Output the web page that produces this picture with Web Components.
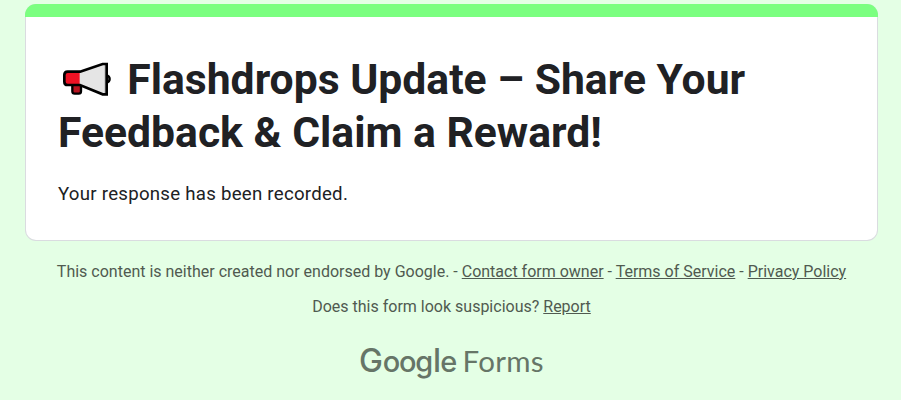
<!DOCTYPE html>
<html lang="en">
<head>
<meta charset="utf-8">
<title>Flashdrops Update</title>
<style>
  body {
    margin: 0;
    background: #e4ffe5;
    font-family: Roboto, "Liberation Sans", sans-serif;
    color: #202124;
  }
</style>
</head>
<body>
<form-page>
  <form-card>
    <span slot="title"><megaphone-icon></megaphone-icon> Flashdrops Update – Share Your Feedback &amp; Claim a Reward!</span>
    Your response has been recorded.
  </form-card>
  <form-footer>
    <span>This content is neither created nor endorsed by Google. - <footer-link>Contact form owner</footer-link> - <footer-link>Terms of Service</footer-link> - <footer-link>Privacy Policy</footer-link></span>
    <span slot="report">Does this form look suspicious? <footer-link>Report</footer-link></span>
  </form-footer>
  <forms-logo></forms-logo>
</form-page>

<script>
class FormPage extends HTMLElement {
  constructor() {
    super();
    this.attachShadow({mode: 'open'}).innerHTML = `
      <style>
        :host {
          display: flex;
          flex-direction: column;
          box-sizing: border-box;
          height: 400px;
          padding: 4px 23px 0 25px;
          overflow: hidden;
        }
      </style>
      <slot></slot>
    `;
  }
}

class FormCard extends HTMLElement {
  constructor() {
    super();
    this.attachShadow({mode: 'open'}).innerHTML = `
      <style>
        :host {
          display: block;
          box-sizing: border-box;
          height: 237px;
          border-radius: 11px;
          overflow: hidden;
          background: #dadce0;
        }
        .bar {
          height: 13px;
          background: #7bff80;
        }
        .content {
          box-sizing: border-box;
          height: 223px;
          margin: 0 1px;
          padding: 36px 32px 0;
          border-radius: 0 0 10px 10px;
          background: #fff;
        }
        h1 {
          margin: 0 0 22px;
          font-size: 42.67px;
          font-weight: 700;
          line-height: 53px;
        }
        .message {
          font-size: 18.67px;
          line-height: 26.67px;
          letter-spacing: 0.25px;
        }
      </style>
      <div class="bar"></div>
      <div class="content">
        <h1><slot name="title"></slot></h1>
        <div class="message"><slot></slot></div>
      </div>
    `;
  }
}

class MegaphoneIcon extends HTMLElement {
  constructor() {
    super();
    this.attachShadow({mode: 'open'}).innerHTML = `
      <style>
        :host {
          display: inline-block;
          width: 58.7px;
          height: 40px;
          line-height: 0;
          vertical-align: -4px;
        }
      </style>
      <svg width="58" height="40" viewBox="24 24 174 120">
        <path d="M168 77h2a9 10 0 0 1 0 20h-2z" fill="#888" stroke="#000" stroke-width="7"/>
        <path d="M67 104h26v20q0 7-7 7H74q-7 0-7-7z" fill="#b81420" stroke="#000" stroke-width="7"/>
        <path d="M90 65H53q-10 0-10 10v20q0 10 10 10h37z" fill="#ee1224"/>
        <path d="M89 65L159 42h11v91h-11L89 106z" fill="#e5e5e5"/>
        <path d="M162 43h8v89h-8z" fill="#ccc"/>
        <path d="M90 65L158 42h12v91h-12L90 105H53q-10 0-10-10V75q0-10 10-10z" fill="none" stroke="#000" stroke-width="8"/>
      </svg>
    `;
  }
}

class FormFooter extends HTMLElement {
  constructor() {
    super();
    this.attachShadow({mode: 'open'}).innerHTML = `
      <style>
        :host {
          display: flex;
          flex-direction: column;
          gap: 14px;
          padding-top: 20px;
          color: #505a50;
          font-size: 16px;
          line-height: 21px;
          text-align: center;
          white-space: nowrap;
        }
      </style>
      <div><slot></slot></div>
      <div><slot name="report"></slot></div>
    `;
  }
}

class FooterLink extends HTMLElement {
  constructor() {
    super();
    this.attachShadow({mode: 'open'}).innerHTML = `
      <style>
        :host {
          display: inline;
        }
        a {
          color: inherit;
          text-decoration: underline;
          cursor: pointer;
        }
      </style>
      <a><slot></slot></a>
    `;
  }
}

class FormsLogo extends HTMLElement {
  constructor() {
    super();
    this.attachShadow({mode: 'open'}).innerHTML = `
      <style>
        :host {
          display: flex;
          justify-content: center;
          padding-top: 24px;
        }
        text {
          fill: #667567;
        }
        .brand {
          font-family: Inter, "Liberation Sans", sans-serif;
          font-size: 29px;
          font-weight: 500;
        }
        .tall {
          font-size: 32px;
        }
        .product {
          font-family: Lato, "Liberation Sans", sans-serif;
          font-size: 29.5px;
        }
      </style>
      <svg width="190" height="44" viewBox="0 0 190 44">
        <text class="brand" x="2 25.8 42 58.2 76 83.2" y="31"><tspan class="tall">G</tspan>oog<tspan class="tall">l</tspan>e</text>
        <text class="product" x="105.5" y="31" textLength="81">Forms</text>
      </svg>
    `;
  }
}

customElements.define('form-page', FormPage);
customElements.define('form-card', FormCard);
customElements.define('megaphone-icon', MegaphoneIcon);
customElements.define('form-footer', FormFooter);
customElements.define('footer-link', FooterLink);
customElements.define('forms-logo', FormsLogo);
</script>
</body>
</html>
